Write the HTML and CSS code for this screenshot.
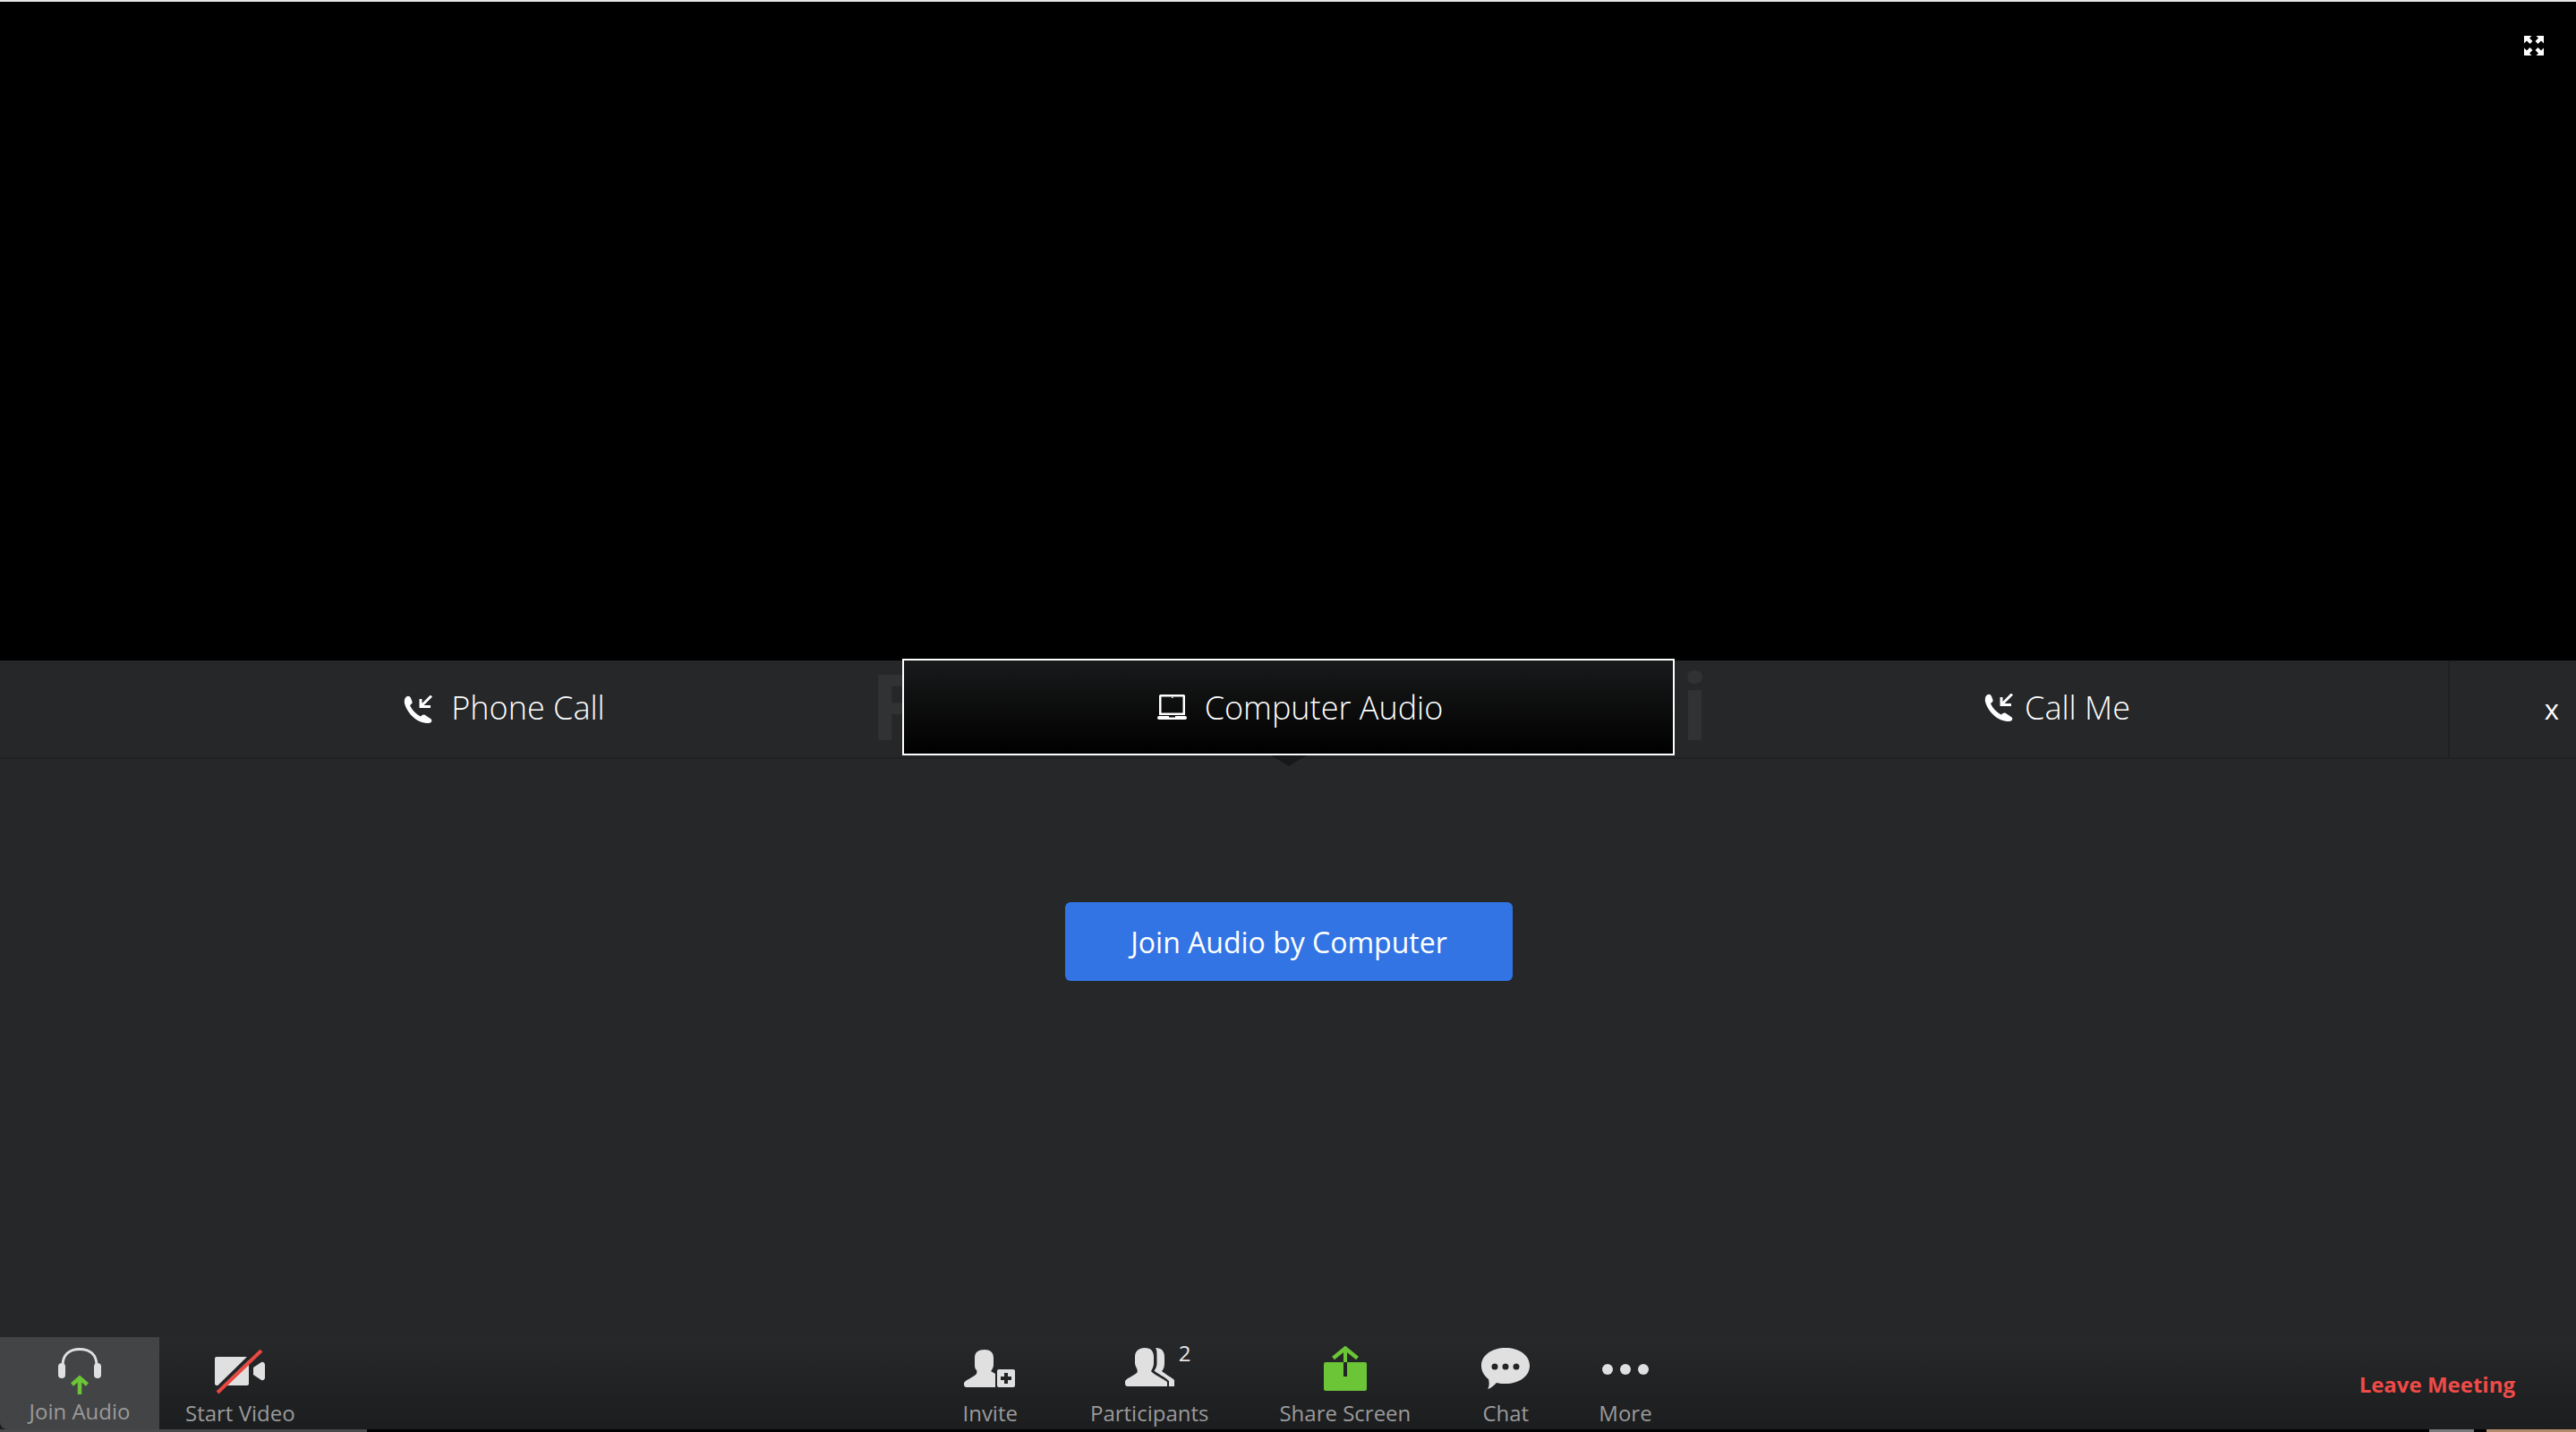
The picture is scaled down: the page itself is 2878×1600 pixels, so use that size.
FILE: index.html
```html
<!DOCTYPE html>
<html lang="en">
<head>
  <meta charset="UTF-8" />
  <title>Join Audio</title>
  <link rel="stylesheet" href="styles.css">
</head>
<body>
  <div id="video">
    <svg class="expand" viewBox="0 0 22 22">
      <path d="M0 0h8.500L6 2.500 9.500 6 6.500 9 3 5.500 0 8.500z"/>
      <path d="M22 0h-8.500L16 2.500 12.500 6l3 3L19 5.500l3 3z"/>
      <path d="M0 22h8.500L6 19.500 9.500 16l-3-3L3 16.500l-3-3z"/>
      <path d="M22 22h-8.500l2.500-2.500L12.500 16l3-3 3.500 3.500 3-3z"/>
    </svg>
  </div>

  <div id="audioPanel">
    <div class="tabs">
      <span class="ghost ghostF">F</span>
      <span class="ghost ghostI">i</span>
      <div class="tab tabFirst">
        <svg class="tabIcon phone" viewBox="0 0 33 31">
          <path d="M4 1.500 C6 0 8 1 9 3 L10.500 7 C11 9 9.500 10 8 11 C10 16 15 21 20 23.500 C21.500 22 23 21 25 22 L31 26 C33 27 32.500 29.500 31 30.500 C28 31.500 24 31 20 29.500 C11 26 4 17 2 9 C1.500 6 2 3 4 1.500 Z"/>
          <path class="arrow" d="M32 0.500 L20.500 12 M20 4 V12.500 H31"/>
        </svg>
        <span>Phone Call</span>
      </div>
      <div class="tab selected">
        <svg class="tabIcon laptop" viewBox="0 0 33 28">
          <path d="M3.500 0h26a1.500 1.500 0 0 1 1.500 1.500V23H2V1.500A1.500 1.500 0 0 1 3.500 0zM4.500 2.500V20.500h24V2.500z" fill-rule="evenodd"/>
          <rect x="16" y="2.500" width="1.500" height="1.500"/>
          <path d="M2 24h11v1.500h7V24h11a2 2 0 0 1 0 4H2a2 2 0 0 1 0-4z"/>
        </svg>
        <span>Computer Audio</span>
      </div>
      <div class="tab tabThird">
        <svg class="tabIcon phone" viewBox="0 0 33 31">
          <path d="M4 1.500 C6 0 8 1 9 3 L10.500 7 C11 9 9.500 10 8 11 C10 16 15 21 20 23.500 C21.500 22 23 21 25 22 L31 26 C33 27 32.500 29.500 31 30.500 C28 31.500 24 31 20 29.500 C11 26 4 17 2 9 C1.500 6 2 3 4 1.500 Z"/>
          <path class="arrow" d="M32 0.500 L20.500 12 M20 4 V12.500 H31"/>
        </svg>
        <span>Call Me</span>
      </div>
      <div class="tabClose">x</div>
    </div>
    <div class="panelBody">
      <button class="joinBtn">Join Audio by Computer</button>
    </div>
  </div>

  <div id="toolbar">
    <div class="toolLeft">
      <div class="tool toolActive">
        <svg class="icon iconJoin" width="48" height="52" viewBox="0 0 48 52">
          <path d="M5 20 C5 7 13 1.500 24 1.500 C35 1.500 43 7 43 20" fill="none" stroke="#e0e0e0" stroke-width="3"/>
          <rect x="0" y="17" width="8" height="17" rx="4" fill="#e0e0e0"/>
          <rect x="40" y="17" width="8" height="17" rx="4" fill="#e0e0e0"/>
          <path d="M24 52 V34 M15.500 41 L24 33.500 L32.500 41" fill="none" stroke="#6cc437" stroke-width="4.500"/>
        </svg>
        <span class="label">Join Audio</span>
      </div>
      <div class="tool toolVideo">
        <svg class="icon iconVideo" width="56" height="50" viewBox="0 0 56 50">
          <path d="M2 8h34a2 2 0 0 1 2 2v28a2 2 0 0 1-2 2H2a2 2 0 0 1-2-2V10a2 2 0 0 1 2-2z" fill="#e0e0e0"/>
          <path d="M43 20 L52 14 C54 13 56 15 56 17 V31 C56 33 54 35 52 34 L43 28 Z" fill="#e0e0e0"/>
          <path d="M3 48 L48 4" stroke="#232426" stroke-width="4" transform="translate(-3 -2)"/>
          <path d="M3 48 L52 1" stroke="#e8483f" stroke-width="4"/>
        </svg>
        <span class="label">Start Video</span>
      </div>
    </div>

    <div class="toolCenter">
      <div class="tool toolInvite">
        <svg class="icon iconInvite" width="58" height="42" viewBox="0 0 58 42">
          <path d="M23 0 C29 0 33 3 33 9 V17 C33 20 31 23 30 24 L35 27 V42 H3 C1 42 0 41 0 39 V37 C3 33 10 31 13 28 C14 27 15 25 14 23 C12 21 12 19 12 17 V9 C12 3 16 0 23 0 Z" fill="#e0e0e0"/>
          <rect x="37" y="22" width="20" height="20" rx="2" fill="#e0e0e0"/>
          <path d="M47 26 V38 M41 32 H53" stroke="#232426" stroke-width="4"/>
        </svg>
        <span class="label">Invite</span>
      </div>
      <div class="tool">
        <div class="participantIcon">
          <svg class="icon" width="55" height="43" viewBox="0 0 55 43">
            <path d="M34 0 C41 0 44 4 44 10 V17 C44 21 43 24 41 26 C46 30 52 33 55 36 V43 H49 V37 C44 32 36 29 32.500 25.500 C34.500 23 35.500 20 35.500 17 V9 C35.500 5 35.500 2 34 0 Z" fill="#e0e0e0"/>
            <path d="M22 0 C29 0 32 4 32 10 V17 C32 21 30 24 29 26 C32 30 42 34 47 38 V43 H3 C1 43 0 42 0 40 V37 C3 33 10 31 13 28 C14 27 14 25 13 23 C12 21 11 19 11 17 V10 C11 4 15 0 22 0 Z" fill="#e0e0e0"/>
          </svg>
          <span class="badge">2</span>
        </div>
        <span class="label">Participants</span>
      </div>
      <div class="tool">
        <svg class="icon iconShare" width="48" height="50" viewBox="0 0 48 50">
          <rect x="0" y="18" width="48" height="32" rx="2" fill="#6cc437"/>
          <path d="M24 18 V34" stroke="#232426" stroke-width="4"/>
          <path d="M24 18 V3" stroke="#6cc437" stroke-width="4"/>
          <path d="M10.500 13.500 L24 2.500 L37.500 13.500" fill="none" stroke="#6cc437" stroke-width="4.500"/>
        </svg>
        <span class="label">Share Screen</span>
      </div>
      <div class="tool toolChat">
        <svg class="icon iconChat" width="54" height="46" viewBox="0 0 54 46">
          <path d="M27 0 C42 0 54 8 54 20 C54 32 42 40 27 40 C24 40 20 40 17 39 C14 42 11 45 7 46 C9 43 9 39 8 35 C3 31 0 26 0 20 C0 8 12 0 27 0 Z" fill="#e0e0e0"/>
          <circle cx="15" cy="21" r="3.500" fill="#232426"/>
          <circle cx="27" cy="21" r="3.500" fill="#232426"/>
          <circle cx="39" cy="21" r="3.500" fill="#232426"/>
        </svg>
        <span class="label">Chat</span>
      </div>
      <div class="tool">
        <svg class="icon iconChat" width="54" height="46" viewBox="0 0 54 46">
          <circle cx="7" cy="24" r="6" fill="#e0e0e0"/>
          <circle cx="27" cy="24" r="6" fill="#e0e0e0"/>
          <circle cx="47" cy="24" r="6" fill="#e0e0e0"/>
        </svg>
        <span class="label">More</span>
      </div>
    </div>

    <div class="leaveBtn">Leave Meeting</div>
  </div>

  <div id="bottomStrip">
    <div class="stripA"></div>
    <div class="stripB"></div>
    <div class="stripC"></div>
  </div>
</body>
</html>
```

FILE: styles.css
```css
* {
  box-sizing: border-box;
}
html, body {
  height: 100%;
}
body {
  margin: 0;
  display: flex;
  flex-direction: column;
  background-color: #000;
  font-family: "Open Sans", "Liberation Sans", sans-serif;
  overflow: hidden;
}

/* video area */
#video {
  height: 738px;
  flex: none;
  display: flex;
  justify-content: flex-end;
  align-items: flex-start;
  padding: 38px 36px 0 0;
  background-color: #000;
  border-top: 2px solid #e6e6e8;
}
.expand {
  width: 22px;
  height: 22px;
  fill: #fff;
}

/* audio panel */
#audioPanel {
  flex: 1;
  display: flex;
  flex-direction: column;
  background-color: #252729;
}
.tabs {
  position: relative;
  display: flex;
  height: 110px;
  border-bottom: 2px solid #1f2123;
  color: #fff;
  font-size: 36px;
  font-weight: 300;
}
.tab {
  display: flex;
  align-items: center;
  justify-content: center;
  width: 864px;
  height: 108px;
}
.tabFirst {
  width: 1008px;
  padding: 0 0 3px 118px;
}
.tabThird {
  padding: 0 10px 3px 0;
}
.tabIcon {
  fill: #fff;
}
.phone {
  width: 33px;
  height: 31px;
}
.phone .arrow {
  fill: none;
  stroke: #fff;
  stroke-width: 3;
}
.tabFirst .phone {
  margin: 3px 21px 0 0;
}
.tabThird .phone {
  margin: 0 13px 1px 0;
}
.laptop {
  width: 33px;
  height: 28px;
  margin-right: 20px;
}
.selected {
  position: relative;
  z-index: 2;
  width: 863px;
  margin-top: -2px;
  padding-left: 26px;
  border: 2px solid #fff;
  background: linear-gradient(#191a1b, #000);
}
.selected::after {
  content: "";
  position: absolute;
  left: 50%;
  bottom: -14px;
  margin-left: -20px;
  border-left: 20px solid transparent;
  border-right: 20px solid transparent;
  border-top: 12px solid #17181a;
}
.tabClose {
  flex: 1;
  display: flex;
  align-items: center;
  justify-content: flex-end;
  padding: 0 19px 0 0;
  border-left: 2px solid #1f2123;
  font-size: 31px;
  font-weight: 400;
}
.ghost {
  position: absolute;
  top: 0;
  color: #303234;
  font-size: 102px;
  font-weight: 700;
  line-height: 100px;
}
.ghostF {
  left: 972px;
}
.ghostI {
  left: 1878px;
}

.panelBody {
  flex: 1;
  display: flex;
  justify-content: center;
  padding: 160px 0 0 2px;
}
.joinBtn {
  width: 500px;
  height: 88px;
  border: none;
  border-radius: 6px;
  background-color: #3274e4;
  color: #fff;
  font-family: inherit;
  font-size: 32px;
  cursor: pointer;
}

/* bottom toolbar */
#toolbar {
  flex: none;
  display: flex;
  height: 103px;
  background: linear-gradient(#27282a, #1c1d1f);
  color: #9a9a9a;
}
.toolLeft {
  display: flex;
}
.tool {
  display: flex;
  flex-direction: column;
  align-items: center;
  justify-content: flex-end;
  cursor: pointer;
}
.icon {
  display: block;
}
.iconJoin {
  margin-bottom: 1px;
}
.iconVideo {
  margin-bottom: 3px;
}
.iconInvite {
  margin-bottom: 11px;
}
.participantIcon {
  position: relative;
  margin-bottom: 12px;
}
.iconShare {
  margin-bottom: 7px;
}
.iconChat {
  margin-bottom: 9px;
}
.label {
  font-size: 24px;
  line-height: 36px;
  white-space: nowrap;
}
.toolActive {
  width: 178px;
  padding-bottom: 2px;
  background-color: #434446;
  border-bottom-left-radius: 8px;
}
.toolVideo {
  margin-left: 29px;
}
.toolCenter {
  display: flex;
  gap: 79px;
  margin-left: auto;
  margin-right: 790px;
}
.toolInvite {
  margin-right: 2px;
}
.toolChat {
  margin-right: -2px;
}
.badge {
  position: absolute;
  left: 60px;
  top: -9px;
  color: #e6e6e6;
  font-size: 24px;
  line-height: 30px;
}
.leaveBtn {
  align-self: flex-start;
  margin: 36px 68px 0 0;
  color: #ef4b47;
  font-size: 24px;
  font-weight: 700;
  line-height: 34px;
  white-space: nowrap;
}

/* bits of the next window along the bottom edge */
#bottomStrip {
  flex: none;
  display: flex;
  height: 3px;
  background-color: #000;
}
.stripA {
  width: 410px;
  background-color: #48494a;
}
.stripB {
  width: 50px;
  margin-left: 2304px;
  background-color: #77787a;
}
.stripC {
  width: 100px;
  margin-left: 14px;
  background-color: #b08a6a;
}
```
